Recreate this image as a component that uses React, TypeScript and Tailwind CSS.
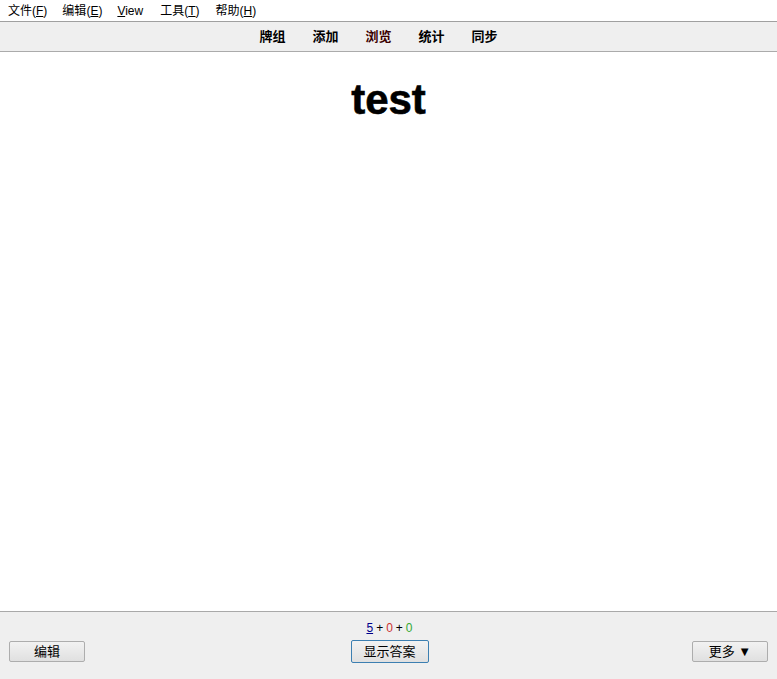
import React from 'react';

const menus = [
  { label: '文件', key: 'F', extra: '' },
  { label: '编辑', key: 'E', extra: '' },
  { label: 'View', key: '', extra: 'mr-[2px]' },
  { label: '工具', key: 'T', extra: 'mr-[1px]' },
  { label: '帮助', key: 'H', extra: '' },
];

const tabs = ['牌组', '添加', '浏览', '统计', '同步'];

const font = { fontFamily: '"Liberation Sans", "Noto Sans CJK SC", sans-serif' };

export default function App() {
  return (
    <div className="w-[777px] h-[679px] flex flex-col bg-white text-black" style={font}>
      {/* Menu bar */}
      <div className="h-[22px] flex items-center pl-[8px] gap-[15px] text-[12px] bg-white border-b border-[#a0a0a0]">
        {menus.map((m) =>
          m.key ? (
            <span key={m.label} className={m.extra}>
              {m.label}(<span className="underline">{m.key}</span>)
            </span>
          ) : (
            <span key={m.label} className={m.extra}>
              <span className="underline">V</span>iew
            </span>
          )
        )}
      </div>

      {/* Toolbar */}
      <div className="h-[30px] flex items-center justify-center gap-[27px] bg-[#efefef] border-b border-[#ababab] text-[13px] font-bold pr-[20px]">
        {tabs.map((t) => (
          <span key={t} className={t === '浏览' ? 'text-[#3a0000]' : ''}>
            {t}
          </span>
        ))}
      </div>

      {/* Card */}
      <div className="flex-1 flex justify-center pt-[24px]">
        <div
          className="text-[42px] font-bold leading-[48px] h-[48px] [-webkit-text-stroke:0.6px_#000]"
          style={{ fontFamily: '"Liberation Sans", Arial, sans-serif' }}
        >
          test
        </div>
      </div>

      {/* Bottom bar */}
      <div className="h-[68px] bg-[#efefef] border-t border-[#a9a9a9] flex flex-col">
        <div className="h-[28px] flex items-end justify-center text-[12px] pb-[3px] pl-[2px]">
          <span className="text-[#00008b] underline">5</span>
          <span className="mx-[3px]">+</span>
          <span className="text-[#c33]">0</span>
          <span className="mx-[3px]">+</span>
          <span className="text-[#3a3]">0</span>
        </div>
        <div className="flex items-center justify-between px-[9px]">
          <button className="w-[76px] h-[21px] text-[13px] border border-[#adadad] rounded-[2px] bg-gradient-to-b from-[#f2f2f2] to-[#e0e0e0]">
            编辑
          </button>
          <button className="w-[78px] h-[23px] text-[13px] border border-[#3c7fb1] rounded-[2px] bg-gradient-to-b from-[#f2f2f2] to-[#e0e0e0] ml-[2px]">
            显示答案
          </button>
          <button className="w-[76px] h-[21px] text-[13px] border border-[#adadad] rounded-[2px] bg-gradient-to-b from-[#f2f2f2] to-[#e0e0e0]">
            更多 ▼
          </button>
        </div>
      </div>
    </div>
  );
}
